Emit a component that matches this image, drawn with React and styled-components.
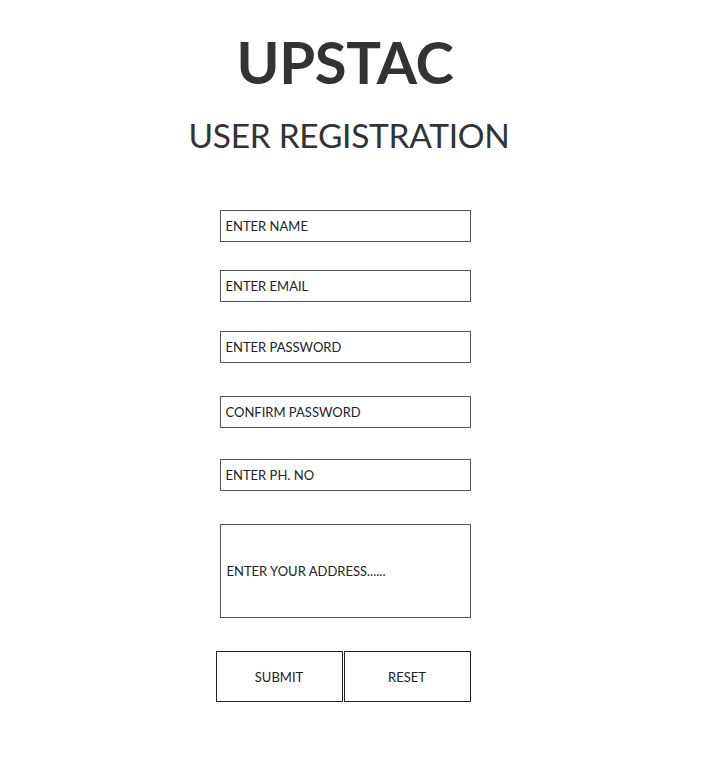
import React from "react";
import styled, { createGlobalStyle } from "styled-components";

const Global = createGlobalStyle`
  html, body { margin: 0; padding: 0; background: #fff; }
  body { font-family: "Source Sans Pro", Lato, "Noto Sans", sans-serif; color: #333; }
`;

const Page = styled.div`
  width: 690px;
  display: flex;
  flex-direction: column;
  align-items: center;
`;

const Brand = styled.h1`
  margin: 30px 0 0;
  font-size: 58px;
  font-weight: 700;
  line-height: 64px;
  color: #333;
  letter-spacing: -0.3px;
`;

const Subtitle = styled.h2`
  margin: 20px 0 0 8px;
  font-size: 33.5px;
  font-weight: 400;
  line-height: 42px;
  color: #333;
  letter-spacing: -0.3px;
`;

const Form = styled.form`
  margin-top: 54px;
  display: flex;
  flex-direction: column;
  align-items: center;
`;

const Field = styled.input`
  box-sizing: border-box;
  width: 251px;
  height: 32px;
  margin-top: ${(p) => p.$gap || 0}px;
  padding: 0 5px;
  border: 1.5px solid #555;
  font-family: inherit;
  font-size: 13px;
  color: #222;
  outline: none;
  &::placeholder { color: #222; opacity: 1; }
`;

const Address = styled.div`
  box-sizing: border-box;
  width: 251px;
  height: 94px;
  margin-top: 33px;
  padding: 0 6px;
  border: 1.5px solid #555;
  display: flex;
  align-items: center;
  font-size: 13px;
  color: #222;
`;

const Buttons = styled.div`
  width: 255px;
  margin-top: 33px;
  margin-left: -4px;
  display: flex;
  gap: 1px;
`;

const Button = styled.button`
  box-sizing: border-box;
  width: 127px;
  height: 51px;
  background: #fff;
  border: 1px solid #222;
  font-family: inherit;
  font-size: 13px;
  color: #222;
`;

export default function App() {
  return (
    <Page>
      <Global />
      <Brand>UPSTAC</Brand>
      <Subtitle>USER REGISTRATION</Subtitle>
      <Form onSubmit={(e) => e.preventDefault()}>
        <Field placeholder="ENTER NAME" />
        <Field $gap={28} placeholder="ENTER EMAIL" />
        <Field $gap={29} placeholder="ENTER PASSWORD" />
        <Field $gap={33} placeholder="CONFIRM PASSWORD" />
        <Field $gap={31} placeholder="ENTER PH. NO" />
        <Address>ENTER YOUR ADDRESS......</Address>
        <Buttons>
          <Button type="submit">SUBMIT</Button>
          <Button type="reset">RESET</Button>
        </Buttons>
      </Form>
    </Page>
  );
}
